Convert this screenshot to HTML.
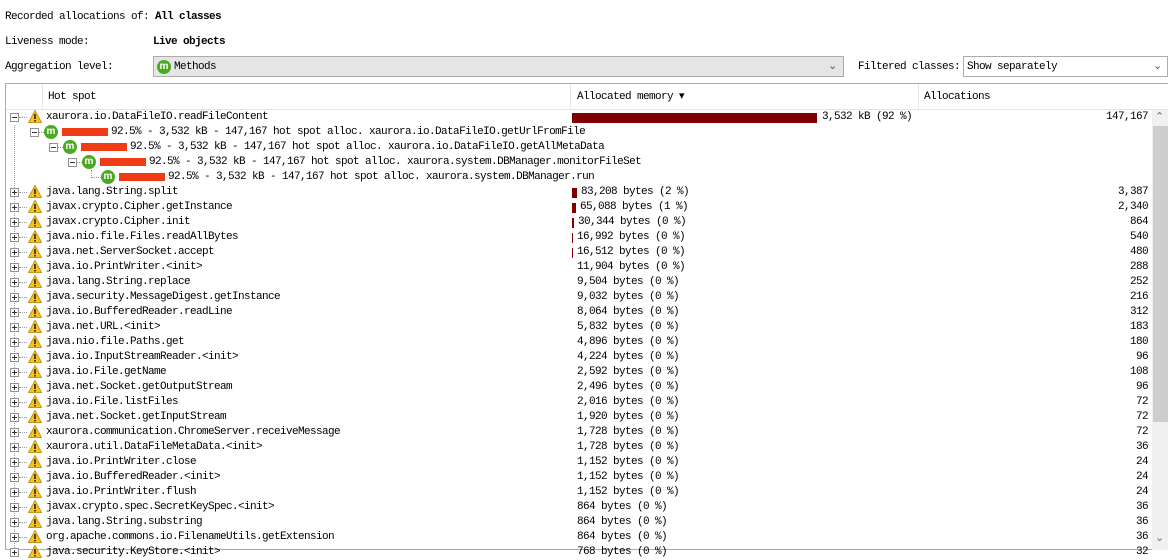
<!DOCTYPE html>
<html><head><meta charset="utf-8">
<style>
*{margin:0;padding:0;box-sizing:border-box}
body{width:1168px;height:550px;background:#fff;position:relative;overflow:hidden;font-family:"Liberation Mono","Noto Sans CJK SC",monospace;font-size:11px;letter-spacing:-0.6px;color:#000}
.a{position:absolute;white-space:nowrap;line-height:14px}
b{font-weight:bold}
.cb{position:absolute;border:1px solid #acacac;height:21px}
.r{position:absolute;left:0;width:1150px;height:15px}
.r .t{position:absolute;left:46px;top:0;line-height:15px;white-space:nowrap}
.r .m{position:absolute;left:577px;line-height:15px;white-space:nowrap}
.r .n{position:absolute;right:2px;line-height:15px}
.r .bar{position:absolute;left:572px;top:3px;height:10px;background:#800000}
.pl{position:absolute;left:10px;top:3px;width:9px;height:9px;border:1px solid #919191;background:#fff}
.pl:before{content:"";position:absolute;left:1px;top:3px;width:5px;height:1px;background:#333}
.pl.p:after{content:"";position:absolute;left:3px;top:1px;width:1px;height:5px;background:#333}
.dh{position:absolute;top:7px;height:1px;border-top:1px dotted #999;width:8px}
.w{position:absolute;left:28px;top:0}
.mi{position:absolute;width:14px;height:14px;border-radius:50%;background:#4caa22;color:#fff;font:bold 10px/13px "Liberation Sans",sans-serif;text-align:center;letter-spacing:0;top:0}
.rb{position:absolute;top:3px;height:8px;width:46px;background:#f03c14}
#rows{position:absolute;left:0;top:1px;width:1150px;height:548px}
</style></head><body>
<div class="a" style="left:5px;top:10px">Recorded allocations of: <b>All classes</b></div>
<div class="a" style="left:5px;top:35px">Liveness mode:</div>
<div class="a" style="left:153px;top:35px"><b>Live objects</b></div>
<div class="a" style="left:5px;top:60px">Aggregation level:</div>
<div class="cb" style="left:153px;top:56px;width:691px;background:#e5e5e5"></div>
<div class="mi" style="left:157px;top:60px">m</div>
<div class="a" style="left:174px;top:60px">Methods</div>
<div class="a" style="left:828px;top:60px;color:#555">&#8964;</div>
<div class="a" style="left:858px;top:60px">Filtered classes:</div>
<div class="cb" style="left:963px;top:56px;width:205px;background:#fff"></div>
<div class="a" style="left:967px;top:60px">Show separately</div>
<div class="a" style="left:1153px;top:60px;color:#555">&#8964;</div>

<div style="position:absolute;left:5px;top:83px;width:1163px;height:467px;border:1px solid #aaa;border-right:none"></div>
<div style="position:absolute;left:6px;top:84px;width:1162px;height:26px;background:#fff;border-bottom:1px solid #e5e5e5"></div>
<div style="position:absolute;left:42px;top:84px;width:1px;height:26px;background:#e5e5e5"></div>
<div style="position:absolute;left:570px;top:84px;width:1px;height:26px;background:#e5e5e5"></div>
<div style="position:absolute;left:918px;top:84px;width:1px;height:26px;background:#e5e5e5"></div>
<div class="a" style="left:48px;top:90px">Hot spot</div>
<div class="a" style="left:577px;top:90px">Allocated memory &#9662;</div>
<div class="a" style="left:924px;top:90px">Allocations</div>
<div style="position:absolute;left:1152px;top:110px;width:16px;height:440px;background:#f0f0f0"></div>
<div style="position:absolute;left:1153px;top:126px;width:15px;height:296px;background:#cdcdcd"></div>
<div class="a" style="left:1155px;top:111px;color:#666">&#8963;</div>
<div class="a" style="left:1155px;top:532px;color:#666">&#8964;</div>
<div style="position:absolute;left:14px;top:125px;height:425px;border-left:1px dotted #999"></div>

<svg width="0" height="0" style="position:absolute"><defs><symbol id="wr" viewBox="0 0 14 13"><path d="M7 0.5L13.5 12.5H0.5Z" fill="#f7c21a" stroke="#c8961a" stroke-width="1"/><rect x="6.2" y="4" width="1.6" height="5" fill="#222"/><rect x="6.2" y="10" width="1.6" height="1.5" fill="#222"/></symbol></defs></svg>

<div id="rows">
<div class="r" style="top:109px"><div class="pl"></div><div class="dh" style="left:19px"></div><svg class="w" width="14" height="13"><use href="#wr"/></svg><div class="t">xaurora.io.DataFileIO.readFileContent</div><div class="bar" style="width:245px"></div><div class="m" style="left:822px">3,532 kB (92 %)</div><div class="n">147,167</div></div>
<div class="r" style="top:124px"><div class="pl" style="left:30px"></div><div class="dh" style="left:39px;width:5px"></div><div class="mi" style="left:44px">m</div><div class="rb" style="left:62px"></div><div class="t" style="left:111px">92.5% - 3,532 kB - 147,167 hot spot alloc. xaurora.io.DataFileIO.getUrlFromFile</div></div>
<div class="r" style="top:139px"><div class="pl" style="left:49px"></div><div class="dh" style="left:58px;width:5px"></div><div class="mi" style="left:63px">m</div><div class="rb" style="left:81px"></div><div class="t" style="left:130px">92.5% - 3,532 kB - 147,167 hot spot alloc. xaurora.io.DataFileIO.getAllMetaData</div></div>
<div class="r" style="top:154px"><div class="pl" style="left:68px"></div><div class="dh" style="left:77px;width:5px"></div><div class="mi" style="left:82px">m</div><div class="rb" style="left:100px"></div><div class="t" style="left:149px">92.5% - 3,532 kB - 147,167 hot spot alloc. xaurora.system.DBManager.monitorFileSet</div></div>
<div class="r" style="top:169px"><div style="position:absolute;left:91px;top:0;height:8px;border-left:1px dotted #999"></div><div class="dh" style="left:91px;width:10px"></div><div class="mi" style="left:101px">m</div><div class="rb" style="left:119px"></div><div class="t" style="left:168px">92.5% - 3,532 kB - 147,167 hot spot alloc. xaurora.system.DBManager.run</div></div>

<div class="r" style="top:184px"><div class="pl p"></div><div class="dh" style="left:19px"></div><svg class="w" width="14" height="13"><use href="#wr"/></svg><div class="t">java.lang.String.split</div><div class="bar" style="width:5px"></div><div class="m" style="left:581px">83,208 bytes (2 %)</div><div class="n">3,387</div></div>
<div class="r" style="top:199px"><div class="pl p"></div><div class="dh" style="left:19px"></div><svg class="w" width="14" height="13"><use href="#wr"/></svg><div class="t">javax.crypto.Cipher.getInstance</div><div class="bar" style="width:4px"></div><div class="m" style="left:580px">65,088 bytes (1 %)</div><div class="n">2,340</div></div>
<div class="r" style="top:214px"><div class="pl p"></div><div class="dh" style="left:19px"></div><svg class="w" width="14" height="13"><use href="#wr"/></svg><div class="t">javax.crypto.Cipher.init</div><div class="bar" style="width:2px"></div><div class="m" style="left:578px">30,344 bytes (0 %)</div><div class="n">864</div></div>
<div class="r" style="top:229px"><div class="pl p"></div><div class="dh" style="left:19px"></div><svg class="w" width="14" height="13"><use href="#wr"/></svg><div class="t">java.nio.file.Files.readAllBytes</div><div class="bar" style="width:1px"></div><div class="m" style="left:577px">16,992 bytes (0 %)</div><div class="n">540</div></div>
<div class="r" style="top:244px"><div class="pl p"></div><div class="dh" style="left:19px"></div><svg class="w" width="14" height="13"><use href="#wr"/></svg><div class="t">java.net.ServerSocket.accept</div><div class="bar" style="width:1px"></div><div class="m" style="left:577px">16,512 bytes (0 %)</div><div class="n">480</div></div>
<div class="r" style="top:259px"><div class="pl p"></div><div class="dh" style="left:19px"></div><svg class="w" width="14" height="13"><use href="#wr"/></svg><div class="t">java.io.PrintWriter.&lt;init&gt;</div><div class="m">11,904 bytes (0 %)</div><div class="n">288</div></div>
<div class="r" style="top:274px"><div class="pl p"></div><div class="dh" style="left:19px"></div><svg class="w" width="14" height="13"><use href="#wr"/></svg><div class="t">java.lang.String.replace</div><div class="m">9,504 bytes (0 %)</div><div class="n">252</div></div>
<div class="r" style="top:289px"><div class="pl p"></div><div class="dh" style="left:19px"></div><svg class="w" width="14" height="13"><use href="#wr"/></svg><div class="t">java.security.MessageDigest.getInstance</div><div class="m">9,032 bytes (0 %)</div><div class="n">216</div></div>
<div class="r" style="top:304px"><div class="pl p"></div><div class="dh" style="left:19px"></div><svg class="w" width="14" height="13"><use href="#wr"/></svg><div class="t">java.io.BufferedReader.readLine</div><div class="m">8,064 bytes (0 %)</div><div class="n">312</div></div>
<div class="r" style="top:319px"><div class="pl p"></div><div class="dh" style="left:19px"></div><svg class="w" width="14" height="13"><use href="#wr"/></svg><div class="t">java.net.URL.&lt;init&gt;</div><div class="m">5,832 bytes (0 %)</div><div class="n">183</div></div>
<div class="r" style="top:334px"><div class="pl p"></div><div class="dh" style="left:19px"></div><svg class="w" width="14" height="13"><use href="#wr"/></svg><div class="t">java.nio.file.Paths.get</div><div class="m">4,896 bytes (0 %)</div><div class="n">180</div></div>
<div class="r" style="top:349px"><div class="pl p"></div><div class="dh" style="left:19px"></div><svg class="w" width="14" height="13"><use href="#wr"/></svg><div class="t">java.io.InputStreamReader.&lt;init&gt;</div><div class="m">4,224 bytes (0 %)</div><div class="n">96</div></div>
<div class="r" style="top:364px"><div class="pl p"></div><div class="dh" style="left:19px"></div><svg class="w" width="14" height="13"><use href="#wr"/></svg><div class="t">java.io.File.getName</div><div class="m">2,592 bytes (0 %)</div><div class="n">108</div></div>
<div class="r" style="top:379px"><div class="pl p"></div><div class="dh" style="left:19px"></div><svg class="w" width="14" height="13"><use href="#wr"/></svg><div class="t">java.net.Socket.getOutputStream</div><div class="m">2,496 bytes (0 %)</div><div class="n">96</div></div>
<div class="r" style="top:394px"><div class="pl p"></div><div class="dh" style="left:19px"></div><svg class="w" width="14" height="13"><use href="#wr"/></svg><div class="t">java.io.File.listFiles</div><div class="m">2,016 bytes (0 %)</div><div class="n">72</div></div>
<div class="r" style="top:409px"><div class="pl p"></div><div class="dh" style="left:19px"></div><svg class="w" width="14" height="13"><use href="#wr"/></svg><div class="t">java.net.Socket.getInputStream</div><div class="m">1,920 bytes (0 %)</div><div class="n">72</div></div>
<div class="r" style="top:424px"><div class="pl p"></div><div class="dh" style="left:19px"></div><svg class="w" width="14" height="13"><use href="#wr"/></svg><div class="t">xaurora.communication.ChromeServer.receiveMessage</div><div class="m">1,728 bytes (0 %)</div><div class="n">72</div></div>
<div class="r" style="top:439px"><div class="pl p"></div><div class="dh" style="left:19px"></div><svg class="w" width="14" height="13"><use href="#wr"/></svg><div class="t">xaurora.util.DataFileMetaData.&lt;init&gt;</div><div class="m">1,728 bytes (0 %)</div><div class="n">36</div></div>
<div class="r" style="top:454px"><div class="pl p"></div><div class="dh" style="left:19px"></div><svg class="w" width="14" height="13"><use href="#wr"/></svg><div class="t">java.io.PrintWriter.close</div><div class="m">1,152 bytes (0 %)</div><div class="n">24</div></div>
<div class="r" style="top:469px"><div class="pl p"></div><div class="dh" style="left:19px"></div><svg class="w" width="14" height="13"><use href="#wr"/></svg><div class="t">java.io.BufferedReader.&lt;init&gt;</div><div class="m">1,152 bytes (0 %)</div><div class="n">24</div></div>
<div class="r" style="top:484px"><div class="pl p"></div><div class="dh" style="left:19px"></div><svg class="w" width="14" height="13"><use href="#wr"/></svg><div class="t">java.io.PrintWriter.flush</div><div class="m">1,152 bytes (0 %)</div><div class="n">24</div></div>
<div class="r" style="top:499px"><div class="pl p"></div><div class="dh" style="left:19px"></div><svg class="w" width="14" height="13"><use href="#wr"/></svg><div class="t">javax.crypto.spec.SecretKeySpec.&lt;init&gt;</div><div class="m">864 bytes (0 %)</div><div class="n">36</div></div>
<div class="r" style="top:514px"><div class="pl p"></div><div class="dh" style="left:19px"></div><svg class="w" width="14" height="13"><use href="#wr"/></svg><div class="t">java.lang.String.substring</div><div class="m">864 bytes (0 %)</div><div class="n">36</div></div>
<div class="r" style="top:529px"><div class="pl p"></div><div class="dh" style="left:19px"></div><svg class="w" width="14" height="13"><use href="#wr"/></svg><div class="t">org.apache.commons.io.FilenameUtils.getExtension</div><div class="m">864 bytes (0 %)</div><div class="n">36</div></div>
<div class="r" style="top:544px"><div class="pl p"></div><svg class="w" width="14" height="13"><use href="#wr"/></svg><div class="t">java.security.KeyStore.&lt;init&gt;</div><div class="m">768 bytes (0 %)</div><div class="n">32</div></div>
</div>
</body></html>
